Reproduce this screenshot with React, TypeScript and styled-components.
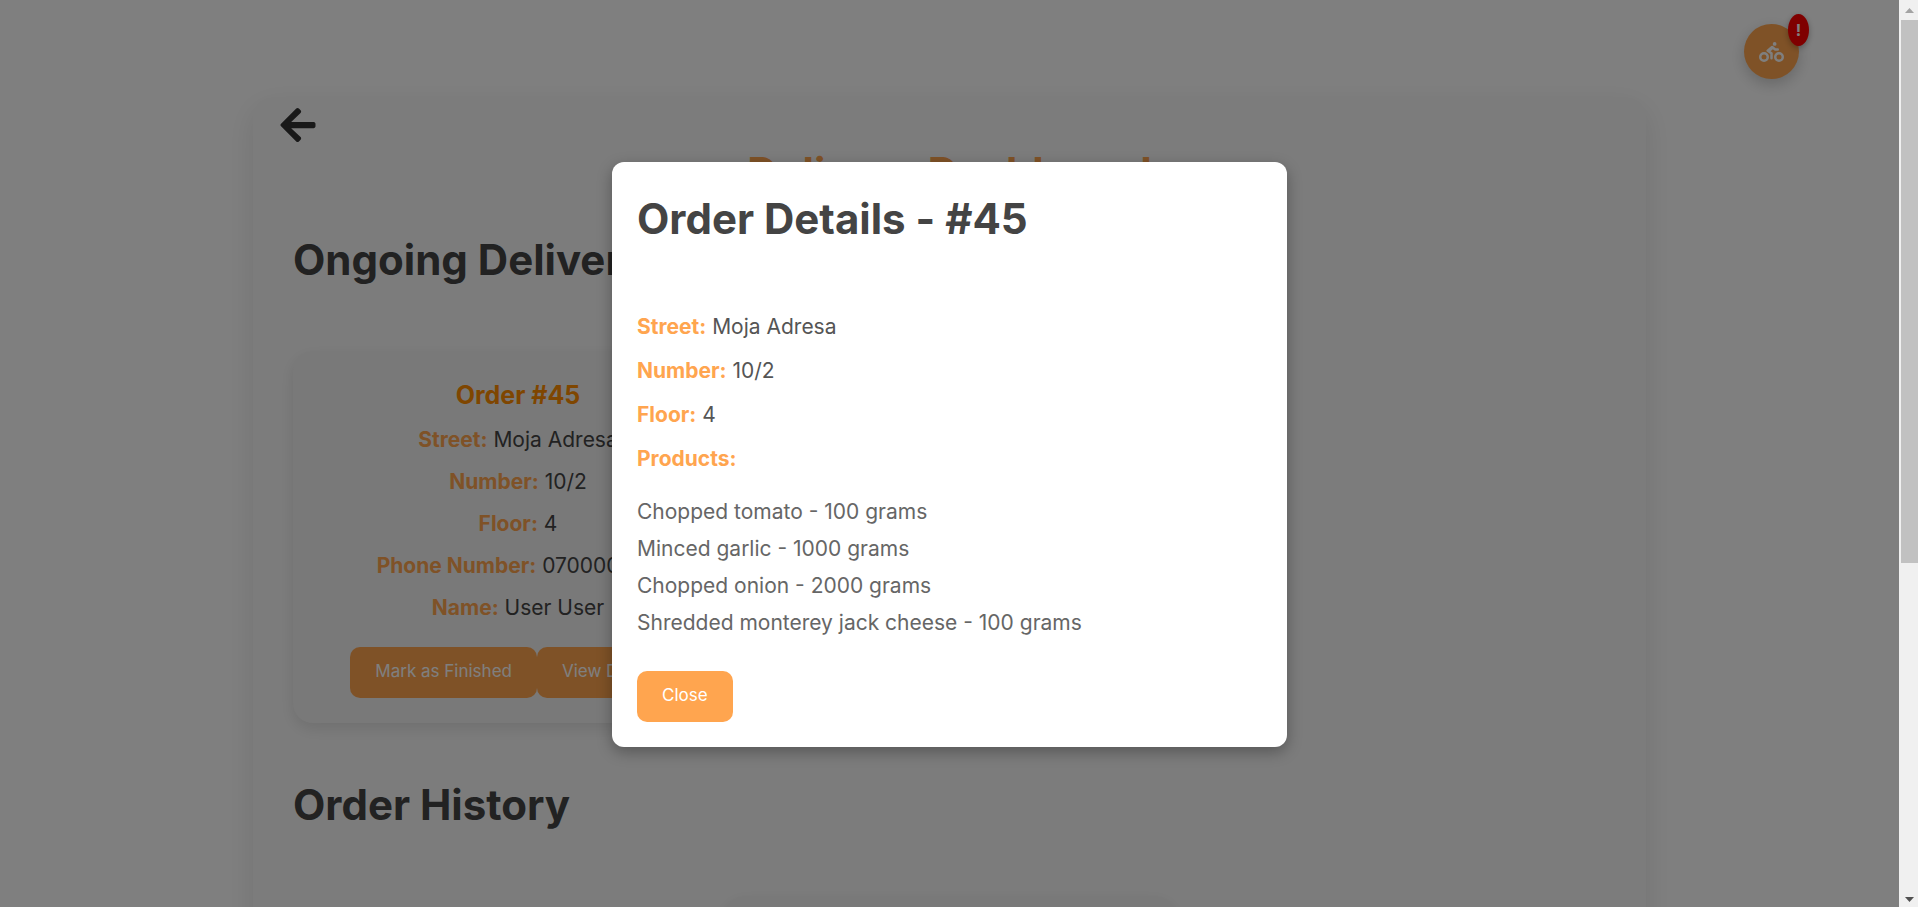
import React, { useState } from "react";
import styled, { createGlobalStyle } from "styled-components";
import { FaArrowLeft, FaBiking } from "react-icons/fa";

const GlobalStyle = createGlobalStyle`
  *, *::before, *::after { box-sizing: border-box; }
  body {
    margin: 0;
    background: #fff;
    color: #444;
    font-family: Inter, sans-serif;
    font-size: 21px;
  }
  h1, h2, h3, p, ul { margin: 0; }
`;

const Shell = styled.div`
  display: grid;
  grid-template-columns: 1fr 19px;
  height: 100vh;
  overflow: hidden;
`;

const Page = styled.div`
  position: relative;
  overflow: hidden;
`;

const Dashboard = styled.main`
  display: flex;
  flex-direction: column;
  max-width: 1393px;
  margin: 97px auto 0;
  padding: 11px 0 40px;
  border-radius: 20px;
  background: #f9f9f9;
  box-shadow: 0 10px 30px rgba(0, 0, 0, 0.1);
`;

const BackButton = styled.button`
  display: flex;
  align-items: center;
  align-self: flex-start;
  height: 34px;
  margin-left: 25px;
  padding: 0;
  border: 0;
  background: none;
  color: #333;
  font-size: 40px;
  cursor: pointer;
`;

const PageTitle = styled.h1`
  margin-bottom: 24px;
  color: #ffa54f;
  font-size: 42px;
  line-height: 62px;
  text-align: center;
`;

const Heading = styled.h2`
  margin-bottom: 60px;
  color: #444;
  font-size: 42px;
  line-height: 63px;
`;

const Section = styled.section`
  padding: 0 40px;
  margin-bottom: 50px;
`;

const CardList = styled.div<{ $center?: boolean }>`
  display: flex;
  flex-wrap: wrap;
  gap: 25px;
  justify-content: ${(p) => (p.$center ? "center" : "flex-start")};
`;

const Card = styled.article`
  width: 450px;
  max-width: 100%;
  padding: 25px;
  border-radius: 20px;
  background: #f2f2f2;
  box-shadow: 0 6px 15px rgba(0, 0, 0, 0.1);
  text-align: center;
`;

const CardTitle = styled.h3`
  margin-bottom: 5px;
  color: #ff8c00;
  font-size: 25px;
  line-height: 38px;
`;

const CardLine = styled.p`
  line-height: 42px;
`;

const Label = styled.strong`
  color: #ffa54f;
  font-weight: 700;
`;

const Actions = styled.div`
  display: flex;
  justify-content: center;
  margin-top: 18px;
`;

const Button = styled.button`
  padding: 12px 25px 15px;
  border: 0;
  border-radius: 10px;
  background: #ffa54f;
  color: #fff;
  font-family: inherit;
  font-size: 17px;
  line-height: 24px;
  cursor: pointer;
`;

const DeliveriesButton = styled.button`
  position: absolute;
  top: 24px;
  right: 100px;
  display: flex;
  align-items: center;
  justify-content: center;
  width: 55px;
  height: 55px;
  padding: 0;
  border: 0;
  border-radius: 50%;
  background: #ffa54f;
  box-shadow: 0 5px 15px rgba(0, 0, 0, 0.2);
  color: #fff;
  cursor: pointer;

  svg {
    width: 25px;
    height: 20px;
  }
`;

const Alert = styled.span`
  position: absolute;
  top: -10px;
  right: -10px;
  width: 21px;
  height: 32px;
  border-radius: 50%;
  background: #f00;
  box-shadow: 0 2px 6px rgba(0, 0, 0, 0.3);
  font-family: Inter, sans-serif;
  font-size: 16px;
  font-weight: 700;
  line-height: 32px;
  text-align: center;
`;

const Overlay = styled.div`
  position: absolute;
  inset: 0;
  display: flex;
  align-items: center;
  justify-content: center;
  padding-top: 2px;
  background: rgba(0, 0, 0, 0.5);
`;

const Modal = styled.div`
  width: 675px;
  max-width: 90%;
  padding: 25px;
  border-radius: 12px;
  background: #fff;
  box-shadow: 0 5px 15px rgba(0, 0, 0, 0.3);
`;

const DetailLine = styled.p`
  margin-bottom: 11px;
  color: #555;
  line-height: 33px;
`;

const ProductList = styled.ul`
  margin: 18px 0 30px;
  padding: 0;
  color: #666;
  line-height: 37px;
  list-style: none;
`;

const Scrollbar = styled.div`
  display: flex;
  flex-direction: column;
  align-items: center;
  padding-left: 2px;
  background: #f0f0f0;
`;

const ScrollArrow = styled.svg`
  flex: none;
  width: 17px;
  height: 20px;
`;

const ScrollTrack = styled.div`
  flex: 1;
  align-self: stretch;
`;

const ScrollThumb = styled.div`
  height: 62.6%;
  background: #c1c1c1;
`;

const address = [
  ["Street:", "Moja Adresa"],
  ["Number:", "10/2"],
  ["Floor:", "4"],
];

const contact = [
  ["Phone Number:", "070000000"],
  ["Name:", "User User"],
];

const products = [
  "Chopped tomato - 100 grams",
  "Minced garlic - 1000 grams",
  "Chopped onion - 2000 grams",
  "Shredded monterey jack cheese - 100 grams",
];

function OrderCard({ onView }: { onView: () => void }) {
  return (
    <Card>
      <CardTitle>Order #45</CardTitle>
      {[...address, ...contact].map(([label, value]) => (
        <CardLine key={label}>
          <Label>{label}</Label> {value}
        </CardLine>
      ))}
      <Actions>
        <Button type="button">Mark as Finished</Button>
        <Button type="button" onClick={onView}>View Details</Button>
      </Actions>
    </Card>
  );
}

function OrderDetails({ onClose }: { onClose: () => void }) {
  return (
    <Overlay>
      <Modal role="dialog" aria-modal="true" aria-labelledby="details-title">
        <Heading id="details-title">Order Details - #45</Heading>
        {address.map(([label, value]) => (
          <DetailLine key={label}>
            <Label>{label}</Label> {value}
          </DetailLine>
        ))}
        <DetailLine>
          <Label>Products:</Label>
        </DetailLine>
        <ProductList>
          {products.map((product) => (
            <li key={product}>{product}</li>
          ))}
        </ProductList>
        <Button type="button" onClick={onClose}>Close</Button>
      </Modal>
    </Overlay>
  );
}

export default function App() {
  const [open, setOpen] = useState(true);
  return (
    <Shell>
      <GlobalStyle />
      <Page>
        <Dashboard>
          <BackButton type="button" aria-label="Back">
            <FaArrowLeft />
          </BackButton>
          <PageTitle>Delivery Dashboard</PageTitle>
          <Section>
            <Heading>Ongoing Deliveries</Heading>
            <CardList>
              <OrderCard onView={() => setOpen(true)} />
            </CardList>
          </Section>
          <Section>
            <Heading>Order History</Heading>
            <CardList $center>
              <Card />
            </CardList>
          </Section>
        </Dashboard>
        <DeliveriesButton type="button" aria-label="Deliveries">
          <FaBiking />
          <Alert>!</Alert>
        </DeliveriesButton>
        {open && <OrderDetails onClose={() => setOpen(false)} />}
      </Page>
      <Scrollbar aria-hidden="true">
        <ScrollArrow viewBox="0 0 17 20">
          <path d="M4 13h9L8.5 8z" fill="#a3a3a3" />
        </ScrollArrow>
        <ScrollTrack>
          <ScrollThumb />
        </ScrollTrack>
        <ScrollArrow viewBox="0 0 17 20">
          <path d="M4 10h9L8.5 15z" fill="#505050" />
        </ScrollArrow>
      </Scrollbar>
    </Shell>
  );
}
